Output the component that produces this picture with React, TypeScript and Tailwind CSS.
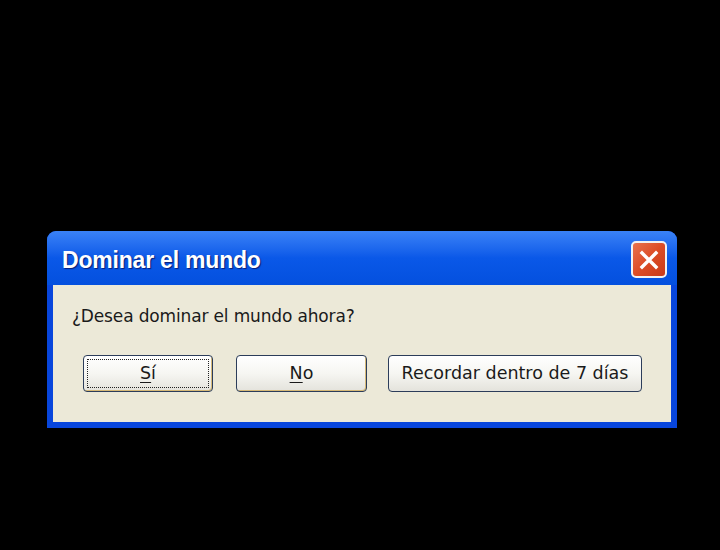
const buttons = [
  { label: "Sí", key: "S", rest: "í", width: "w-[130px]", focused: true },
  { label: "No", key: "N", rest: "o", width: "w-[131px]", focused: false },
];

export default function App() {
  return (
    <div className="relative h-[550px] w-[720px] overflow-hidden bg-black font-['DejaVu_Sans',sans-serif]">
      {/* Window */}
      <div className="absolute left-[47px] top-[231px] flex h-[197px] w-[630px] flex-col overflow-hidden rounded-t-[9px] bg-[#0846dc]">
        {/* Title bar */}
        <div className="flex h-[54px] shrink-0 items-center justify-between bg-gradient-to-b from-[#3a82f6] via-[#0a58e8] to-[#0450de] pl-[15px] pr-[10px]">
          <span className="mt-[5px] text-[23px] font-bold leading-none tracking-[-0.2px] text-white [text-shadow:1px_1px_1px_#0a1e78] font-['Liberation_Sans',sans-serif]">
            Dominar el mundo
          </span>
          <div className="mt-[3px] flex h-[37px] w-[36px] items-center justify-center rounded-[5px] border-2 border-[#f1f1f1] bg-gradient-to-br from-[#e8714c] via-[#dc4c25] to-[#c8391a]">
            <svg width="22" height="22" viewBox="0 0 22 22">
              <path d="M4 4 L18 18 M18 4 L4 18" stroke="#ffffff" strokeWidth="3.4" strokeLinecap="square" />
            </svg>
          </div>
        </div>

        {/* Body */}
        <div className="mx-[6px] mb-[6px] flex flex-1 flex-col bg-[#ece9d8] pl-[19px]">
          <p className="mt-[20px] text-[17px] leading-[22px] tracking-[-0.15px] text-[#1a1a1a]">
            ¿Desea dominar el mundo ahora?
          </p>
          <div className="mt-[28px] flex items-center">
            {buttons.map((b) => (
              <div
                key={b.label}
                className={`${b.width} ${b.focused ? "ml-[11px] mr-[23px]" : "mr-[21px]"} flex h-[37px] items-center justify-center rounded-[4px] border border-[#2c3d5a] bg-gradient-to-b from-[#ffffff] via-[#f6f6f2] to-[#e4e3dc] p-[3px] shadow-[inset_-1px_-1px_0_#d6b978]`}
              >
                <div
                  className={`flex h-full w-full items-center justify-center ${b.focused ? "border border-dotted border-[#222]" : ""}`}
                >
                  <span className="text-[17.5px] text-[#1a1a1a]">
                    <span className="underline decoration-1 underline-offset-[3px]">{b.key}</span>
                    {b.rest}
                  </span>
                </div>
              </div>
            ))}
            <div className="flex h-[37px] w-[254px] items-center justify-center rounded-[4px] border border-[#2c3d5a] bg-gradient-to-b from-[#ffffff] via-[#f6f6f2] to-[#e4e3dc]">
              <span className="text-[17.5px] text-[#1a1a1a]">Recordar dentro de 7 días</span>
            </div>
          </div>
        </div>
      </div>
    </div>
  );
}
